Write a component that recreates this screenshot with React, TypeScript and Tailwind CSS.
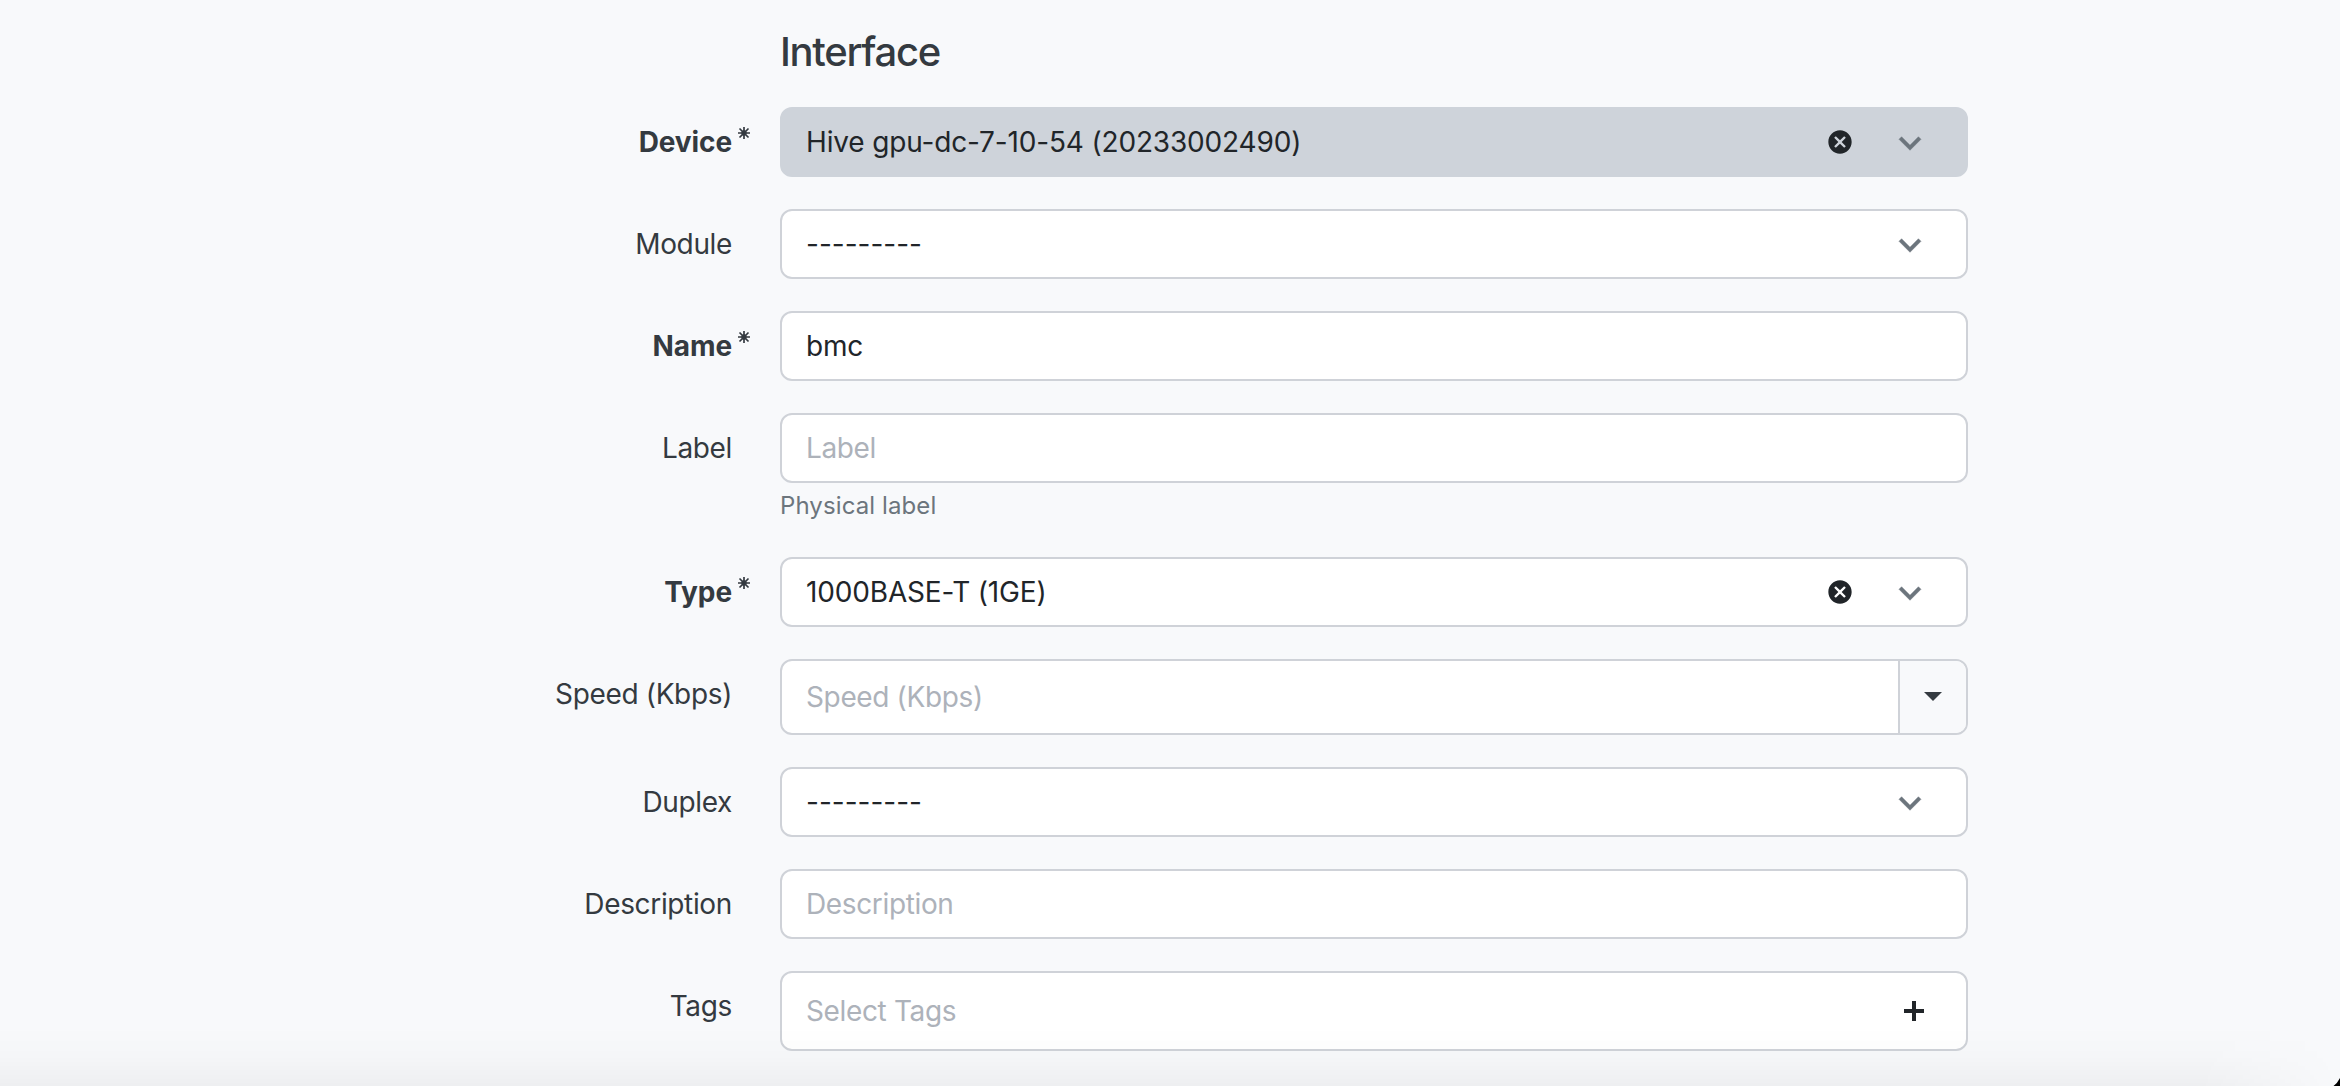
import React from "react";

const CHEVRON = "M7.41,8.58L12,13.17L16.59,8.58L18,10L12,16L6,10L7.41,8.58Z";
const CLOSE_CIRCLE =
  "M12,2C17.53,2 22,6.47 22,12C22,17.53 17.53,22 12,22C6.47,22 2,17.53 2,12C2,6.47 6.47,2 12,2M15.59,7L12,10.59L8.41,7L7,8.41L10.59,12L7,15.59L8.41,17L12,13.41L15.59,17L17,15.59L13.41,12L17,8.41L15.59,7Z";

function Chevron() {
  return (
    <svg viewBox="0 0 24 24" className="mt-px mr-[34px] size-11 shrink-0 fill-[#6c757d]">
      <path d={CHEVRON} strokeWidth="0.25" className="stroke-[#6c757d]" />
    </svg>
  );
}

function Clear() {
  return (
    <svg viewBox="0 0 24 24" className="mr-[34px] mb-px size-7 shrink-0 fill-[#212529]">
      <path d={CLOSE_CIRCLE} />
    </svg>
  );
}

function Plus() {
  return (
    <svg viewBox="0 0 20 20" className="mr-[42px] size-5 shrink-0 fill-[#212529]">
      <path d="M8 0h4v8h8v4h-8v8H8v-8H0V8h8z" />
    </svg>
  );
}

function Asterisk() {
  return (
    <svg
      viewBox="0 0 12 12"
      className="absolute top-[20px] left-full ml-1.5 size-3 overflow-visible stroke-[#343a40]"
      strokeWidth="1.7"
    >
      <path d="M6 0V12M0 6H12M1.5 1.5L10.5 10.5M10.5 1.5L1.5 10.5" />
      <circle cx="6" cy="6" r="1.8" className="fill-[#343a40]" />
    </svg>
  );
}

function Row({
  label,
  required,
  help,
  children,
}: {
  label: string;
  required?: boolean;
  help?: string;
  children: React.ReactNode;
}) {
  return (
    <div className="flex items-start">
      <div className="flex w-[732px] shrink-0 justify-end">
        <label
          className={
            required
              ? "relative text-[28px] leading-[70px] font-bold tracking-[-0.1px] text-[#343a40]"
              : "relative text-[28px] leading-[70px] tracking-[-0.35px] text-[#343a40]"
          }
        >
          {label}
          {required && <Asterisk />}
        </label>
      </div>
      <div className="ml-12 w-[1188px]">
        {children}
        {help && (
          <p className="mt-1 h-[38px] text-2xl leading-[38px] tracking-[0.1px] text-[#6c757d]">{help}</p>
        )}
      </div>
    </div>
  );
}

function Box({
  text,
  placeholder,
  className = "h-[70px] border-[#cfd2d8] bg-white",
  children,
}: {
  text?: string;
  placeholder?: string;
  className?: string;
  children?: React.ReactNode;
}) {
  return (
    <div className={`flex items-center overflow-hidden rounded-xl border-2 pl-6 text-[28px] ${className}`}>
      <span
        className={
          text
            ? text.startsWith("-")
              ? "flex-1 text-[#212529]"
              : "flex-1 tracking-[-0.16px] text-[#212529]"
            : "flex-1 tracking-[-0.36px] text-[#adb2ba]"
        }
      >
        {text ?? placeholder}
      </span>
      {children}
    </div>
  );
}

export default function App() {
  return (
    <div className="relative h-[1086px] w-[2340px] overflow-hidden bg-[#f8f9fb] font-['Inter',sans-serif]">
      <h5 className="ml-[780px] pt-7 text-[40px] leading-[48px] font-medium tracking-[-1.3px] text-[#343a40]">
        Interface
      </h5>
      <form className="mt-[31px] flex flex-col gap-8">
        <Row label="Device" required>
          <Box text="Hive gpu-dc-7-10-54 (20233002490)" className="h-[70px] border-[#ced3da] bg-[#ced3da]">
            <Clear />
            <Chevron />
          </Box>
        </Row>
        <Row label="Module">
          <Box text="---------">
            <Chevron />
          </Box>
        </Row>
        <Row label="Name" required>
          <Box text="bmc" />
        </Row>
        <Row label="Label" help="Physical label">
          <Box placeholder="Label" />
        </Row>
        <Row label="Type" required>
          <Box text="1000BASE-T (1GE)">
            <Clear />
            <Chevron />
          </Box>
        </Row>
        <Row label="Speed (Kbps)">
          <Box placeholder="Speed (Kbps)" className="h-[76px] border-[#cfd2d8] bg-white">
            <span className="flex h-full w-[68px] items-center justify-center border-l-2 border-[#cfd2d8] bg-[#f8f9fb]">
              <svg viewBox="0 0 18 9" className="mb-0.5 h-[9px] w-[18px] fill-[#343a40]">
                <path d="M0 0H18L9 9Z" />
              </svg>
            </span>
          </Box>
        </Row>
        <Row label="Duplex">
          <Box text="---------">
            <Chevron />
          </Box>
        </Row>
        <Row label="Description">
          <Box placeholder="Description" />
        </Row>
        <Row label="Tags">
          <Box placeholder="Select Tags" className="h-20 border-[#cfd2d8] bg-white">
            <Plus />
          </Box>
        </Row>
      </form>
      <div className="pointer-events-none absolute inset-x-0 bottom-0 h-[60px] bg-linear-to-b from-black/0 via-black/[0.012] to-black/[0.04] [mask-image:linear-gradient(to_right,black_94%,transparent)]" />
      <svg viewBox="0 0 7 8" className="absolute right-0 bottom-0 h-2 w-[7px] fill-black">
        <path d="M7 0Q4.5 5 0.5 8H7Z" />
      </svg>
    </div>
  );
}
